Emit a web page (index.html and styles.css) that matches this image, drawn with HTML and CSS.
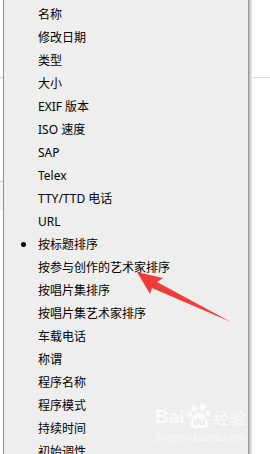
FILE: index.html
```html
<!DOCTYPE html>
<html lang="zh">
<head>
    <meta charset="UTF-8">
    <meta name="viewport" content="width=device-width, initial-scale=1.0">
    <title>排序方式</title>
    <link rel="stylesheet" href="styles.css">
</head>
<body>
    <div class="screen">
        <div class="edge edge-left"></div>
        <ul class="menu">
            <li class="item">名称</li>
            <li class="item">修改日期</li>
            <li class="item">类型</li>
            <li class="item">大小</li>
            <li class="item">EXIF 版本</li>
            <li class="item">ISO 速度</li>
            <li class="item">SAP</li>
            <li class="item">Telex</li>
            <li class="item">TTY/TTD 电话</li>
            <li class="item">URL</li>
            <li class="item checked">按标题排序</li>
            <li class="item">按参与创作的艺术家排序</li>
            <li class="item">按唱片集排序</li>
            <li class="item">按唱片集艺术家排序</li>
            <li class="item">车载电话</li>
            <li class="item">称谓</li>
            <li class="item">程序名称</li>
            <li class="item">程序模式</li>
            <li class="item">持续时间</li>
            <li class="item">初始调性</li>
        </ul>
        <div class="shadow"></div>
        <div class="edge edge-right"></div>

        <!-- 红色箭头 -->
        <svg class="arrow" width="270" height="454" viewBox="0 0 270 454">
            <polygon points="137,272 163,278 157,282 231,322 152,288 150,294" fill="#f23b3b"/>
        </svg>

        <!-- 水印 -->
        <div class="watermark">
            <div class="wm-logo">
                <span class="wm-bai">Bai</span>
                <svg class="wm-paw" width="27" height="27" viewBox="0 0 26 26">
                    <ellipse cx="8" cy="5" rx="2.6" ry="3.2" fill="#fafafa"/>
                    <ellipse cx="16" cy="4" rx="2.6" ry="3.2" fill="#fafafa"/>
                    <ellipse cx="3.5" cy="11" rx="2.4" ry="3" fill="#fafafa"/>
                    <ellipse cx="21.5" cy="10" rx="2.4" ry="3" fill="#fafafa"/>
                    <path d="M12.5 9 C8 9 3 17 3.5 21 C4 25 9 24.5 12.5 24 C16 24.5 21 25 21.5 21 C22 17 17 9 12.5 9 Z" fill="#fafafa"/>
                    <text x="12.5" y="21" text-anchor="middle" class="wm-du">du</text>
                </svg>
                <span class="wm-cn">经验</span>
            </div>
            <div class="wm-url">jingyan.baidu.com</div>
        </div>
    </div>
</body>
</html>
```

FILE: styles.css
```css
/* Base */
* {
    margin: 0;
    padding: 0;
    box-sizing: border-box;
}

body {
    width: 270px;
    height: 454px;
    overflow: hidden;
    background: #ffffff;
    font-family: 'Segoe UI', 'Noto Sans', 'Noto Sans CJK SC', sans-serif;
}

.screen {
    position: relative;
    display: flex;
    height: 454px;
}

/* Window edges behind the menu */
.edge {
    background:
        linear-gradient(#d9d9d9, #d9d9d9) 0 77px / 100% 1px no-repeat,
        #ffffff;
}

.edge-left {
    width: 3px;
    background:
        linear-gradient(#d6d6d6, #d6d6d6) 0 77px / 100% 1px no-repeat,
        linear-gradient(#cfcfcf, #cfcfcf) 0 181px / 100% 1px no-repeat,
        linear-gradient(#f4f4f4, #f4f4f4) 0 182px / 100% 28px no-repeat,
        #ffffff;
}

.edge-right {
    flex: 1;
}

/* Context menu */
.menu {
    list-style: none;
    width: 246px;
    padding-top: 3px;
    background: #eeeeee;
    border-left: 1px solid #8e8e8e;
    border-right: 1px solid #9a9a9a;
}

.item {
    position: relative;
    height: 23px;
    line-height: 23px;
    padding-left: 34px;
    font-size: 12px;
    color: #000000;
    white-space: nowrap;
}

.item.checked::before {
    content: '';
    position: absolute;
    left: 17px;
    top: 9px;
    width: 5px;
    height: 5px;
    border-radius: 50%;
    background: #000000;
}

.shadow {
    width: 3px;
    background: linear-gradient(to right, #b5b5b5, #d8d8d8 60%, #f3f3f3);
}

/* Overlays */
.arrow {
    position: absolute;
    left: 0;
    top: 0;
}

.watermark {
    position: absolute;
    left: 155px;
    top: 403px;
    color: #fafafa;
    text-align: center;
}

.wm-logo {
    display: flex;
    align-items: center;
    gap: 1px;
}

.wm-bai {
    font-family: 'Liberation Sans', sans-serif;
    font-weight: bold;
    font-size: 19px;
}

.wm-du {
    font-family: 'Liberation Sans', sans-serif;
    font-weight: bold;
    font-size: 9px;
    fill: #e6e6e6;
}

.wm-cn {
    font-family: 'Noto Sans CJK SC', sans-serif;
    font-size: 16px;
}

.wm-url {
    font-family: 'Liberation Sans', sans-serif;
    font-size: 11px;
    margin-top: 1px;
}
```
